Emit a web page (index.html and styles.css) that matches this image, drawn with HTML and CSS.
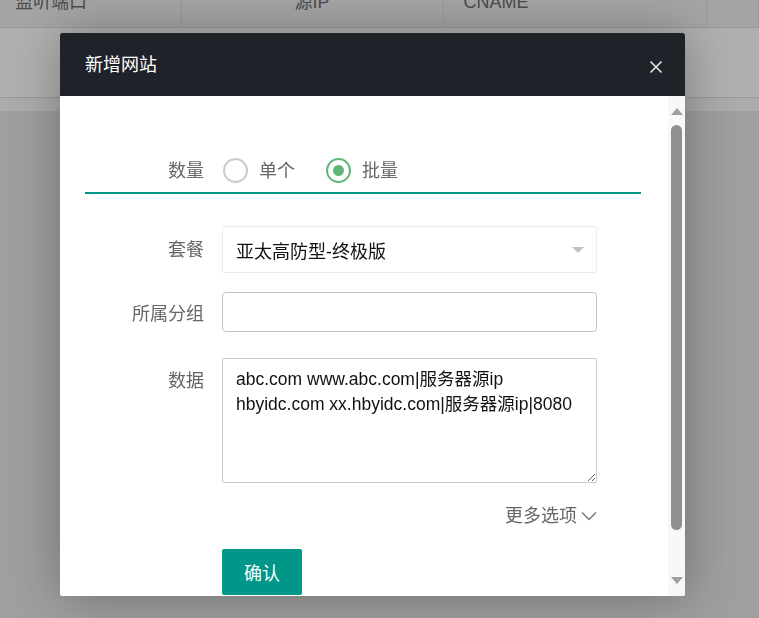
FILE: index.html
```html
<!DOCTYPE html>
<html lang="zh-CN">
<head>
    <meta charset="UTF-8">
    <meta name="viewport" content="width=device-width, initial-scale=1.0">
    <title>新增网站</title>
    <link rel="stylesheet" href="styles.css">
</head>
<body>
    <div class="page">
        <table class="list">
            <thead>
                <tr>
                    <th class="col-port">监听端口</th>
                    <th class="col-ip">源IP</th>
                    <th class="col-cname">CNAME</th>
                    <th></th>
                </tr>
            </thead>
            <tbody>
                <tr>
                    <td colspan="4"></td>
                </tr>
            </tbody>
        </table>
        <div class="list-foot"></div>
    </div>

    <div class="shade"></div>

    <div class="dialog">
        <div class="dialog-head">
            <span class="dialog-title">新增网站</span>
            <span class="dialog-close">
                <svg width="14" height="14" viewBox="0 0 14 14">
                    <path d="M1.5 1.5 L12.5 12.5 M12.5 1.5 L1.5 12.5" stroke="#e6e6e6" stroke-width="1.6" fill="none"/>
                </svg>
            </span>
        </div>

        <div class="dialog-body">
            <div class="dialog-content">
                <div class="count-row">
                    <label class="field-label">数量</label>
                    <span class="radio"></span>
                    <span class="radio-text">单个</span>
                    <span class="radio checked"><i></i></span>
                    <span class="radio-text">批量</span>
                </div>

                <div class="field field-select">
                    <label class="field-label">套餐</label>
                    <div class="select-box">
                        <span>亚太高防型-终极版</span>
                        <span class="select-arrow"></span>
                    </div>
                </div>

                <div class="field field-group">
                    <label class="field-label">所属分组</label>
                    <input type="text" class="text-input" autocomplete="off">
                </div>

                <div class="field field-data">
                    <label class="field-label">数据</label>
                    <textarea class="data-input">abc.com www.abc.com|服务器源ip
hbyidc.com xx.hbyidc.com|服务器源ip|8080</textarea>
                </div>

                <div class="more-options">
                    更多选项
                    <svg width="16" height="10" viewBox="0 0 16 10">
                        <polyline points="1,1.5 8,8.5 15,1.5" stroke="#777" stroke-width="1.4" fill="none"/>
                    </svg>
                </div>

                <button class="submit-btn">确认</button>
            </div>

            <div class="scrollbar">
                <span class="scroll-up"></span>
                <span class="scroll-thumb"></span>
                <span class="scroll-down"></span>
            </div>
        </div>
    </div>
</body>
</html>
```

FILE: styles.css
```css
* {
    box-sizing: border-box;
}

body {
    font-family: "Liberation Sans", "Noto Sans CJK SC", sans-serif;
    margin: 0;
    background: #e4e4e4;
    height: 618px;
    overflow: hidden;
}

/* background list (page is scrolled a little) */
.page {
    margin-top: -14px;
}

.list {
    width: 100%;
    border-collapse: collapse;
    table-layout: fixed;
    background: #fff;
}

.list th {
    height: 41px;
    padding: 7px 0 0 15px;
    vertical-align: top;
    text-align: left;
    font-weight: normal;
    font-size: 18px;
    line-height: 18px;
    color: #6e6e6e;
    background: #ececec;
    border-right: 1px solid #dcdcdc;
    border-bottom: 1px solid #dcdcdc;
}

.list .col-port {
    width: 181px;
}

.list .col-ip {
    width: 262px;
    text-align: center;
    padding-left: 0;
}

.list .col-cname {
    width: 263px;
    padding-left: 20px;
}

.list td {
    height: 70px;
    border-bottom: 1px solid #d8d8d8;
    background: #fcfcfc;
}

.list-foot {
    height: 13px;
    background: #f6f6f6;
}

.shade {
    position: fixed;
    top: 0;
    left: 0;
    right: 0;
    bottom: 0;
    background: rgba(0, 0, 0, 0.3);
}

/* dialog */
.dialog {
    position: absolute;
    left: 60px;
    top: 33px;
    width: 625px;
    height: 563px;
    background: #fff;
    border-radius: 2px;
    overflow: hidden;
    box-shadow: 1px 1px 50px rgba(0, 0, 0, 0.3);
}

.dialog-head {
    height: 63px;
    background: #20222a;
    padding: 0 22px 0 25px;
    display: flex;
    align-items: center;
    justify-content: space-between;
}

.dialog-title {
    color: #fff;
    font-size: 18px;
    line-height: 24px;
}

.dialog-close {
    display: flex;
    padding-top: 4px;
}

.dialog-body {
    display: flex;
    height: 500px;
}

.dialog-content {
    flex: 1;
    padding: 62px 27px 0 25px;
    overflow: hidden;
}

.field-label {
    width: 119px;
    flex-shrink: 0;
    margin-right: 18px;
    text-align: right;
    color: #666;
    font-size: 18px;
    line-height: 24px;
}

.count-row {
    display: flex;
    align-items: center;
    height: 36px;
    padding-bottom: 9px;
    border-bottom: 2px solid #009688;
    margin-bottom: 32px;
}

.count-row .field-label {
    margin-right: 19px;
}

.radio {
    width: 25px;
    height: 25px;
    border: 2px solid #cbcbcb;
    border-radius: 50%;
    display: flex;
    align-items: center;
    justify-content: center;
}

.radio.checked {
    border-color: #5fb878;
    margin-left: 31px;
}

.radio.checked i {
    width: 11px;
    height: 11px;
    border-radius: 50%;
    background: #5fb878;
}

.radio-text {
    margin-left: 11px;
    color: #666;
    font-size: 18px;
    line-height: 24px;
}

.field {
    display: flex;
    align-items: center;
}

.field-select {
    margin-bottom: 19px;
}

.field-group {
    margin-bottom: 26px;
}

.field-group .field-label {
    padding-top: 3px;
}

.field-data {
    align-items: flex-start;
    margin-bottom: 21px;
}

.field-data .field-label {
    padding-top: 11px;
}

.select-box {
    width: 375px;
    height: 47px;
    border: 1px solid #ececec;
    border-radius: 2px;
    padding: 0 12px 0 13px;
    display: flex;
    align-items: center;
    justify-content: space-between;
    font-size: 18px;
    color: #111;
}

.select-arrow {
    width: 0;
    height: 0;
    border-left: 6px solid transparent;
    border-right: 6px solid transparent;
    border-top: 6px solid #c2c2c2;
}

.text-input {
    width: 375px;
    height: 40px;
    border: 1px solid #c2c2c2;
    border-radius: 4px;
    padding: 0 13px;
    font-size: 17px;
    font-family: inherit;
    outline: none;
}

.data-input {
    width: 375px;
    height: 125px;
    padding: 8px 13px;
    border: 1px solid #cacaca;
    border-radius: 2px;
    font-family: inherit;
    font-size: 17.5px;
    line-height: 25px;
    color: #111;
    resize: vertical;
    outline: none;
}

.more-options {
    margin-left: 137px;
    width: 375px;
    height: 24px;
    margin-bottom: 21px;
    display: flex;
    align-items: center;
    justify-content: flex-end;
    color: #666;
    font-size: 18px;
    line-height: 24px;
}

.more-options svg {
    margin-left: 4px;
}

.submit-btn {
    margin-left: 137px;
    width: 80px;
    height: 46px;
    border: none;
    border-radius: 2px;
    background: #009688;
    color: #fff;
    font-family: inherit;
    font-size: 18px;
    cursor: pointer;
}

/* fake scrollbar */
.scrollbar {
    width: 17px;
    background: #f8f8f8;
    display: flex;
    flex-direction: column;
    align-items: center;
}

.scroll-up {
    margin-top: 12px;
    width: 0;
    height: 0;
    border-left: 6px solid transparent;
    border-right: 6px solid transparent;
    border-bottom: 7px solid #a0a0a0;
}

.scroll-thumb {
    margin-top: 10px;
    width: 11px;
    height: 405px;
    border-radius: 6px;
    background: #8f8f8f;
}

.scroll-down {
    margin-top: 47px;
    width: 0;
    height: 0;
    border-left: 6px solid transparent;
    border-right: 6px solid transparent;
    border-top: 7px solid #a0a0a0;
}
```
